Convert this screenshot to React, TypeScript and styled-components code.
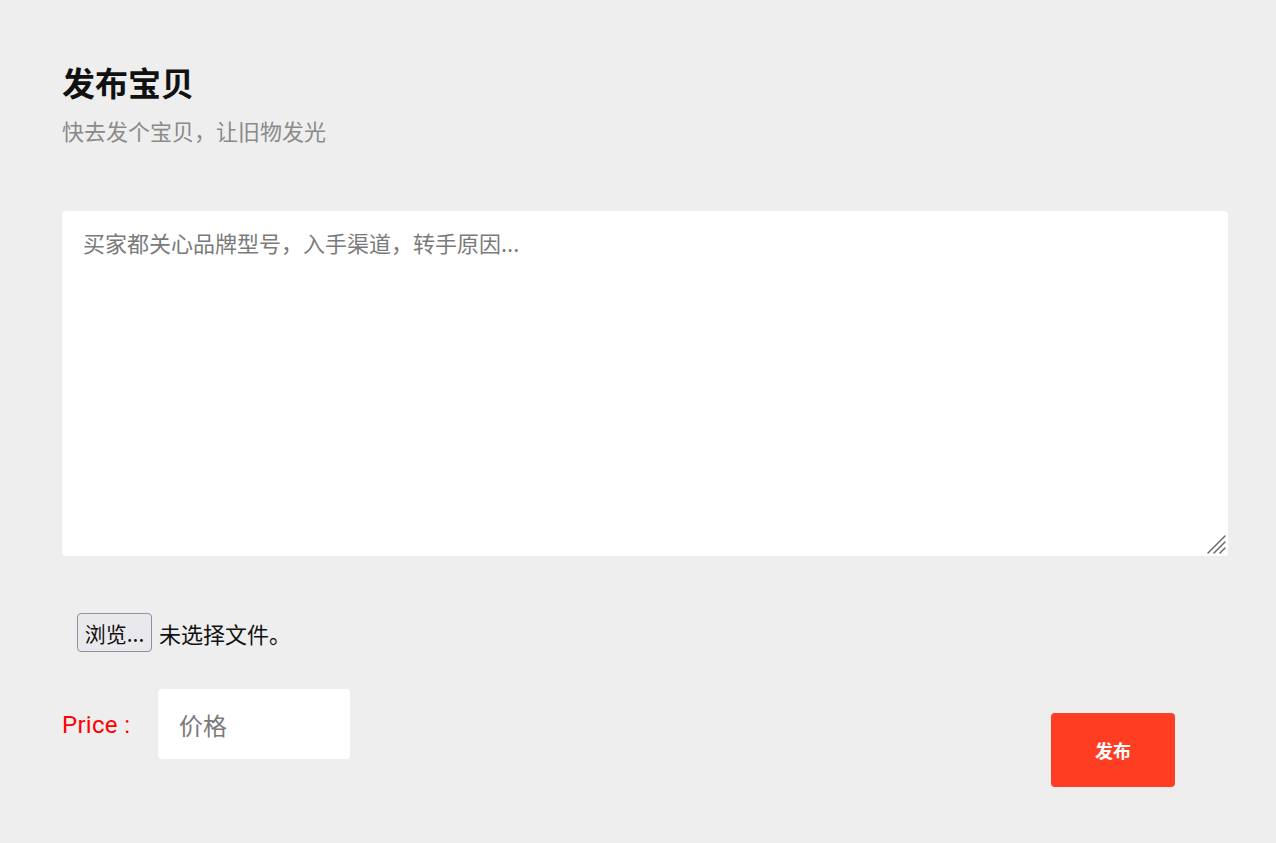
import React from "react";
import styled, { createGlobalStyle } from "styled-components";

const Global = createGlobalStyle`
  html, body { margin: 0; padding: 0; background: #eeeeee; }
  body { font-family: "Noto Sans", "Noto Sans CJK SC", sans-serif; }
  * { box-sizing: border-box; }
`;

const Page = styled.div`
  min-height: 843px;
  background: #eeeeee;
  padding: 58px 48px 0 62px;
  display: flex;
  flex-direction: column;
`;

const Title = styled.h1`
  margin: 0;
  font-family: "Noto Sans CJK SC", sans-serif;
  font-size: 33px;
  line-height: 48px;
  font-weight: 700;
  color: #111111;
`;

const Subtitle = styled.p`
  margin: 8px 0 0;
  font-family: "Noto Sans CJK SC", sans-serif;
  font-size: 22px;
  line-height: 32px;
  color: #8a8a8a;
`;

const EditorBox = styled.div`
  position: relative;
  margin-top: 65px;
  width: 100%;
  height: 345px;
`;

const TextArea = styled.textarea`
  display: block;
  width: 100%;
  height: 100%;
  border: none;
  border-radius: 4px;
  background: #ffffff;
  padding: 16px 21px;
  font-family: "Noto Sans CJK SC", sans-serif;
  font-size: 22px;
  line-height: 30px;
  color: #222;
  outline: none;
  resize: none;
  &::placeholder { color: #7a7a7a; }
`;

const Grip = styled.svg`
  position: absolute;
  right: 2px;
  bottom: 2px;
  width: 20px;
  height: 20px;
  pointer-events: none;
`;

const FileRow = styled.div`
  margin-top: 57px;
  margin-left: 15px;
  display: flex;
  align-items: center;
  gap: 7px;
  font-family: "Noto Sans CJK SC", sans-serif;
  font-size: 22px;
  color: #111;
`;

const BrowseButton = styled.button`
  height: 39px;
  width: 75px;
  padding: 0;
  border: 1px solid #8f8f9d;
  border-radius: 4px;
  background: #e9e9ed;
  font-family: "Noto Sans CJK SC", sans-serif;
  font-size: 21px;
  color: #111;
  display: flex;
  align-items: center;
  justify-content: center;
`;

const PriceRow = styled.div`
  margin-top: 37px;
  display: flex;
  align-items: flex-start;
`;

const PriceLabel = styled.label`
  margin-top: 22px;
  width: 96px;
  font-family: Roboto, "Noto Sans", sans-serif;
  font-size: 24px;
  line-height: 28px;
  letter-spacing: 0.3px;
  color: #ff0000;
`;

const PriceInput = styled.input`
  width: 192px;
  height: 70px;
  border: none;
  border-radius: 4px;
  background: #fff;
  padding: 0 21px;
  font-family: "Noto Sans CJK SC", sans-serif;
  font-size: 24px;
  color: #222;
  outline: none;
  &::placeholder { color: #7a7a7a; }
`;

const Spacer = styled.div`
  flex: 1;
`;

const SubmitButton = styled.button`
  margin-top: 24px;
  margin-right: 53px;
  width: 124px;
  height: 74px;
  border: none;
  border-radius: 4px;
  background: #ff3d22;
  color: #fff;
  font-family: "Noto Sans CJK SC", sans-serif;
  font-size: 18px;
  font-weight: 700;
`;

export default function App() {
  return (
    <>
      <Global />
      <Page>
        <Title>发布宝贝</Title>
        <Subtitle>快去发个宝贝，让旧物发光</Subtitle>
        <EditorBox>
          <TextArea placeholder="买家都关心品牌型号，入手渠道，转手原因..." />
          <Grip viewBox="0 0 20 20">
            <g stroke="#6a6a6a" strokeWidth="1.5" strokeLinecap="round">
              <line x1="2" y1="19" x2="19" y2="2" />
              <line x1="8" y1="19" x2="19" y2="8" />
              <line x1="14" y1="19" x2="19" y2="14" />
            </g>
          </Grip>
        </EditorBox>
        <FileRow>
          <BrowseButton type="button">浏览...</BrowseButton>
          <span>未选择文件。</span>
        </FileRow>
        <PriceRow>
          <PriceLabel>Price :</PriceLabel>
          <PriceInput placeholder="价格" />
          <Spacer />
          <SubmitButton type="button">发布</SubmitButton>
        </PriceRow>
      </Page>
    </>
  );
}
